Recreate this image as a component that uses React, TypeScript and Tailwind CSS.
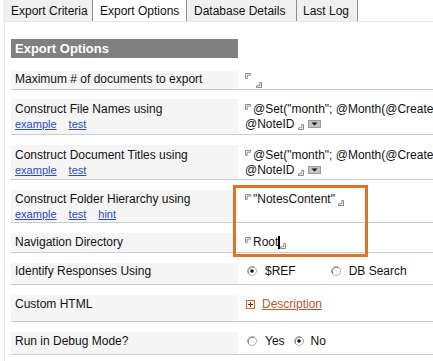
import React from 'react';

const OpenMark = () => (
  <svg width="6" height="6" viewBox="0 0 6 6" className="block shrink-0">
    <path d="M0.5 5.5V0.5H5.5V2.2H2.2V5.5Z" fill="none" stroke="#8a8a8a" strokeWidth="1" />
  </svg>
);

const CloseMark = () => (
  <svg width="6" height="6" viewBox="0 0 6 6" className="block shrink-0">
    <path d="M5.5 0.5V5.5H0.5V3.8H3.8V0.5Z" fill="none" stroke="#8a8a8a" strokeWidth="1" />
  </svg>
);

const DropBtn = () => (
  <span className="ml-[4px] flex h-[8px] w-[13px] items-center justify-center border border-[#9a9a9a] bg-[#c4c4c4]">
    <svg width="7" height="4" viewBox="0 0 7 4" className="block">
      <path d="M0.5 0.5H6.5L3.5 3.5Z" fill="#111" />
    </svg>
  </span>
);

const Radio = ({ checked }: { checked?: boolean }) => (
  <svg width="10" height="10" viewBox="0 0 10 10" className="block shrink-0">
    <circle cx="5" cy="5" r="4.5" fill="#fff" stroke="#b0b0b0" />
    <path d="M1.6 7.6A4.5 4.5 0 0 1 7.6 1.6" fill="none" stroke="#808080" />
    {checked && <circle cx="5" cy="5" r="1.8" fill="#111" />}
  </svg>
);

const Links = ({ items }: { items: string[] }) => (
  <div className="flex gap-[12px] text-[11px] leading-[16px] text-[#2a4bc4] underline">
    {items.map((l) => (
      <span key={l}>{l}</span>
    ))}
  </div>
);

interface RowProps {
  label: string;
  links?: string[];
  cell: string;
  pad: string;
  mt?: string;
  children?: React.ReactNode;
}

const Row = ({ label, links, cell, pad, mt = 'mt-[10px]', children }: RowProps) => (
  <div className={`${mt} flex border-b border-[#cccccc]`}>
    <div className={`w-[227px] shrink-0 bg-[#f5f5f5] pl-[4px] ${cell} ${pad}`}>
      <div className="leading-[14px]">{label}</div>
      {links && <Links items={links} />}
    </div>
    <div className={`min-w-0 flex-1 overflow-hidden whitespace-nowrap pl-[7px] ${pad}`}>{children}</div>
  </div>
);

const FormulaValue = () => (
  <div className="leading-[14px]">
    <div className="flex items-start">
      <span className="mt-[2px]"><OpenMark /></span>
      <span className="ml-[2px]">@Set("month"; @Month(@Create</span>
    </div>
    <div className="mt-[1px] flex items-center">
      <span>@NoteID</span>
      <span className="ml-[3px] mt-[5px]"><CloseMark /></span>
      <DropBtn />
    </div>
  </div>
);

export default function App() {
  const tabs = [
    { name: 'Export Criteria', w: 'w-[90px] pl-[8px] bg-[#f0f0f0]' },
    { name: 'Export Options', w: 'w-[94px] pl-[7px] bg-white' },
    { name: 'Database Details', w: 'w-[110px] pl-[7px] bg-[#f0f0f0]' },
    { name: 'Last Log', w: 'w-[61px] pl-[6px] bg-[#f0f0f0]' },
  ];

  return (
    <div className="relative h-[361px] w-[433px] overflow-hidden bg-white font-['Liberation_Sans',Arial,sans-serif] text-[12px] text-[#111]">
      <div className="flex h-[21px] pl-[3px]">
        {tabs.map((t) => (
          <div key={t.name} className={`flex h-full items-center border-r border-[#8c8c8c] pt-[1px] ${t.w}`}>
            {t.name}
          </div>
        ))}
      </div>

      <div className="ml-[4px] h-[340px] border-l border-t border-[#e6e6e6] pl-[6px] pt-[17px]">
        <div className="h-[19px] w-[227px] bg-[#808080] pl-[4px] text-[13px] font-bold leading-[19px] text-white">
          Export Options
        </div>

        <Row label="Maximum # of documents to export" cell="h-[18px]" pad="pt-[1px]" mt="mt-[13px]">
          <div className="flex items-start">
            <span className="mt-[1px]"><OpenMark /></span>
            <span className="ml-[5px] mt-[10px]"><CloseMark /></span>
          </div>
        </Row>

        <Row label="Construct File Names using" links={['example', 'test']} cell="h-[35px]" pad="pt-[3px]" mt="mt-[9px]">
          <FormulaValue />
        </Row>

        <Row label="Construct Document Titles using" links={['example', 'test']} cell="h-[34px]" pad="pt-[3px]">
          <FormulaValue />
        </Row>

        <Row label="Construct Folder Hierarchy using" links={['example', 'test', 'hint']} cell="h-[32px]" pad="pt-[2px]">
          <div className="flex items-start leading-[14px]">
            <span className="mt-[2px]"><OpenMark /></span>
            <span className="ml-[2px]">"NotesContent"</span>
            <span className="ml-[3px] mt-[8px]"><CloseMark /></span>
          </div>
        </Row>

        <Row label="Navigation Directory" cell="h-[19px]" pad="pt-[2px]">
          <div className="flex items-start leading-[14px]">
            <span className="mt-[2px]"><OpenMark /></span>
            <span className="ml-[2px]">Root</span>
            <span className="mt-[1px] h-[13px] w-[2px] bg-black" />
            <span className="mt-[8px]"><CloseMark /></span>
          </div>
        </Row>

        <Row label="Identify Responses Using" cell="h-[21px]" pad="pt-[1px]">
          <div className="flex items-center leading-[14px]">
            <span className="ml-[2px]"><Radio checked /></span>
            <span className="ml-[8px]">$REF</span>
            <span className="ml-[35px]"><Radio /></span>
            <span className="ml-[8px]">DB Search</span>
          </div>
        </Row>

        <Row label="Custom HTML" cell="h-[26px]" pad="pt-[2px]">
          <div className="flex items-center leading-[14px]">
            <span className="ml-[1px] flex h-[9px] w-[9px] items-center justify-center border border-[#d2691e] bg-[#fff8f0]">
              <svg width="5" height="5" viewBox="0 0 5 5" className="block">
                <path d="M0 2.5H5M2.5 0V5" stroke="#7a2e10" strokeWidth="1" />
              </svg>
            </span>
            <span className="ml-[7px] text-[#b05a30] underline">Description</span>
          </div>
        </Row>

        <Row label="Run in Debug Mode?" cell="h-[22px]" pad="pt-[2px]">
          <div className="flex items-center leading-[14px]">
            <span className="ml-[2px]"><Radio /></span>
            <span className="ml-[8px]">Yes</span>
            <span className="ml-[9px]"><Radio checked /></span>
            <span className="ml-[7px]">No</span>
          </div>
        </Row>
      </div>

      <div className="pointer-events-none absolute left-[233px] top-[185px] h-[72px] w-[135px] border-[3px] border-[#d9762a]" />
    </div>
  );
}
